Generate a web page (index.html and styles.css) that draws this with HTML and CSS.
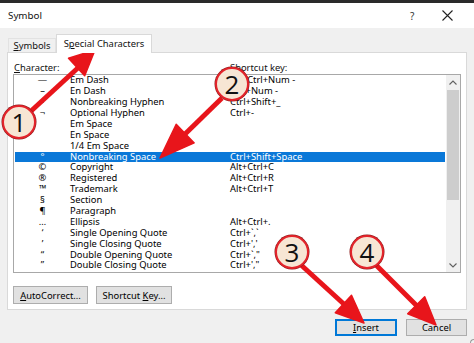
FILE: index.html
```html
<!DOCTYPE html>
<html>
<head>
<meta charset="utf-8">
<link rel="stylesheet" href="styles.css">
</head>
<body>
<div class="dialog">
  <div class="topbar"></div>
  <div class="titlebar">
    <span class="title">Symbol</span>
    <span class="help">?</span>
    <span class="close"><svg width="11" height="11" viewBox="0 0 11 11"><path d="M0.5 0.5 L10.5 10.5 M10.5 0.5 L0.5 10.5" stroke="#222" stroke-width="1.1" fill="none"/></svg></span>
  </div>
  <div class="tabs">
    <div class="tab"><span><u>S</u>ymbols</span></div>
    <div class="tab active"><span>S<u>p</u>ecial Characters</span></div>
  </div>
  <div class="panel">
    <div class="labels">
      <span class="lab-char"><u>C</u>haracter:</span>
      <span class="lab-key">Shortcut key:</span>
    </div>
    <div class="listbox">
      <div class="rows">
        <div class="row"><span class="sym">—</span><span class="name">Em Dash</span><span class="key">Alt+Ctrl+Num -</span></div>
        <div class="row"><span class="sym">–</span><span class="name">En Dash</span><span class="key">Ctrl+Num -</span></div>
        <div class="row"><span class="sym">-</span><span class="name">Nonbreaking Hyphen</span><span class="key">Ctrl+Shift+_</span></div>
        <div class="row"><span class="sym">¬</span><span class="name">Optional Hyphen</span><span class="key">Ctrl+-</span></div>
        <div class="row"><span class="sym"></span><span class="name">Em Space</span><span class="key"></span></div>
        <div class="row"><span class="sym"></span><span class="name">En Space</span><span class="key"></span></div>
        <div class="row"><span class="sym"></span><span class="name">1/4 Em Space</span><span class="key"></span></div>
        <div class="row selected"><span class="sym">°</span><span class="name">Nonbreaking Space</span><span class="key">Ctrl+Shift+Space</span></div>
        <div class="row"><span class="sym">©</span><span class="name">Copyright</span><span class="key">Alt+Ctrl+C</span></div>
        <div class="row"><span class="sym">®</span><span class="name">Registered</span><span class="key">Alt+Ctrl+R</span></div>
        <div class="row"><span class="sym">™</span><span class="name">Trademark</span><span class="key">Alt+Ctrl+T</span></div>
        <div class="row"><span class="sym">§</span><span class="name">Section</span><span class="key"></span></div>
        <div class="row"><span class="sym">¶</span><span class="name">Paragraph</span><span class="key"></span></div>
        <div class="row"><span class="sym">…</span><span class="name">Ellipsis</span><span class="key">Alt+Ctrl+.</span></div>
        <div class="row"><span class="sym">‘</span><span class="name">Single Opening Quote</span><span class="key">Ctrl+`,`</span></div>
        <div class="row"><span class="sym">’</span><span class="name">Single Closing Quote</span><span class="key">Ctrl+','</span></div>
        <div class="row"><span class="sym">“</span><span class="name">Double Opening Quote</span><span class="key">Ctrl+`,"</span></div>
        <div class="row"><span class="sym">”</span><span class="name">Double Closing Quote</span><span class="key">Ctrl+',"</span></div>
      </div>
      <div class="scrollbar">
        <div class="sb-arrow"><svg width="8" height="5" viewBox="0 0 8 5"><path d="M0.5 4.5 L4 1 L7.5 4.5" stroke="#606060" stroke-width="1.1" fill="none"/></svg></div>
        <div class="sb-track"><div class="sb-thumb"></div></div>
        <div class="sb-arrow"><svg width="8" height="5" viewBox="0 0 8 5"><path d="M0.5 0.5 L4 4 L7.5 0.5" stroke="#606060" stroke-width="1.1" fill="none"/></svg></div>
      </div>
    </div>
    <div class="panel-buttons">
      <button class="btn btn-auto"><span><u>A</u>utoCorrect...</span></button>
      <button class="btn btn-key"><span>Shortcut <u>K</u>ey...</span></button>
    </div>
  </div>
  <div class="footer">
    <button class="btn btn-insert"><span><u>I</u>nsert</span></button>
    <button class="btn btn-cancel"><span>Cancel</span></button>
  </div>
  <div class="grip"></div>
</div>

<svg class="arrows" width="474" height="343" viewBox="0 0 474 343">
  <g fill="#e8151b" stroke="#e8151b" stroke-linejoin="round">
    <line x1="30" y1="112" x2="80" y2="66" stroke-width="5"/>
    <polygon points="95,50 84.7,75.8 68.5,58.2" stroke-width="1.5"/>
    <line x1="222" y1="98" x2="182" y2="137" stroke-width="5"/>
    <polygon points="160,158 194.2,142.9 176.2,124.3" stroke-width="1.5"/>
    <line x1="300" y1="264" x2="346" y2="306" stroke-width="5"/>
    <polygon points="364,323 335.3,312.8 351.5,295.2" stroke-width="1.5"/>
    <line x1="375" y1="264" x2="419" y2="308" stroke-width="5"/>
    <polygon points="436,325 407.7,313.7 424.7,296.7" stroke-width="1.5"/>
  </g>
</svg>
<div class="badge b1">1</div>
<div class="badge b2">2</div>
<div class="badge b3">3</div>
<div class="badge b4">4</div>
</body>
</html>
```
FILE: styles.css
```css
* { box-sizing: border-box; }
html, body {
  margin: 0;
  padding: 0;
}
body {
  width: 474px;
  height: 343px;
  overflow: hidden;
  position: relative;
  background: #f0f0f0;
  font-family: "Noto Sans", "Open Sans", sans-serif;
  font-size: 9.4px;
  color: #000;
}
u { text-decoration: underline; text-underline-offset: 1px; }
.dialog {
  width: 474px;
  height: 343px;
  display: flex;
  flex-direction: column;
}
.topbar {
  height: 3px;
  background: #2a2a2a;
}
.titlebar {
  height: 25px;
  background: #fff;
  display: flex;
  align-items: center;
  padding-left: 8px;
}
.title {
  font-size: 9.8px;
  flex: 1;
  color: #111;
}
.help {
  font-size: 10px;
  color: #333;
  width: 10px;
  margin-right: 22px;
}
.close {
  width: 11px;
  height: 11px;
  margin-right: 21px;
  display: flex;
}
.tabs {
  margin-top: 6px;
  height: 18px;
  display: flex;
  align-items: flex-end;
  padding-left: 8px;
  position: relative;
  z-index: 2;
}
.tab {
  height: 14px;
  width: 48px;
  border: 1px solid #e2e2e2;
  border-bottom: none;
  display: flex;
  align-items: center;
  justify-content: center;
  color: #111;
  white-space: nowrap;
}
.tab.active {
  height: 19px;
  width: 96px;
  margin-bottom: -1px;
  background: #fff;
  border-color: #d9d9d9;
  padding-bottom: 2px;
}
.panel {
  margin: 0 7px;
  height: 258px;
  background: #fff;
  border: 1px solid #d9d9d9;
  padding: 8px 5px 0 5px;
  display: flex;
  flex-direction: column;
}
.labels {
  height: 12px;
  display: flex;
  align-items: center;
  margin-bottom: 1px;
  color: #111;
}
.lab-char { width: 217px; padding-left: 1px; }
.listbox {
  height: 199px;
  border: 1px solid #a8a8a8;
  display: flex;
}
.rows {
  flex: 1;
  padding: 0.3px 1px 0 1px;
}
.row {
  height: 10.9px;
  display: flex;
  align-items: center;
  white-space: nowrap;
  line-height: 10.9px;
}
.row.selected {
  background: #0a78d8;
  color: #fff;
}
.sym { width: 55px; text-align: center; }
.name { width: 160px; }
.key { flex: 1; }
.scrollbar {
  width: 14px;
  background: #f0f0f0;
  display: flex;
  flex-direction: column;
}
.sb-arrow {
  height: 14px;
  display: flex;
  align-items: center;
  justify-content: center;
}
.sb-track {
  flex: 1;
  padding: 1px 1px 0 1px;
}
.sb-thumb {
  height: 110px;
  background: #cdcdcd;
}
.panel-buttons {
  margin-top: 13px;
  display: flex;
  gap: 8px;
}
.btn {
  font-family: inherit;
  font-size: 9.4px;
  color: #000;
  background: #e1e1e1;
  border: 1px solid #adadad;
  padding: 0;
  margin: 0;
  height: 18px;
  display: flex;
  align-items: center;
  justify-content: center;
  white-space: nowrap;
}
.btn-auto { width: 75px; }
.btn-key { width: 76px; }
.footer {
  margin-top: 9px;
  display: flex;
  justify-content: flex-end;
  gap: 9px;
  padding-right: 7px;
}
.btn-insert {
  width: 62px;
  height: 17px;
  border: 1px solid #0078d7;
  box-shadow: inset 0 0 0 1px #0078d7;
}
.btn-cancel {
  width: 61px;
  height: 17px;
}
.grip {
  position: absolute;
  right: 0;
  bottom: 0;
  width: 4px;
  height: 4px;
  border-top: 1px solid #999;
  border-left: 1px solid #999;
  border-radius: 4px 0 0 0;
}
.arrows {
  position: absolute;
  left: 0;
  top: 0;
}
.badge {
  position: absolute;
  width: 34px;
  height: 34px;
  border-radius: 50%;
  background: #f7e6d4;
  border: 2px solid #e3242b;
  box-shadow: 0 0 0 0.5px #8a1a1a;
  display: flex;
  align-items: center;
  justify-content: center;
  font-family: "Open Sans", "Noto Sans", sans-serif;
  font-size: 26px;
  line-height: 1;
  color: #111;
}
.b1 { left: 2px; top: 105px; }
.b2 { left: 215px; top: 67px; }
.b3 { left: 275px; top: 235px; }
.b4 { left: 350px; top: 235px; }
```
